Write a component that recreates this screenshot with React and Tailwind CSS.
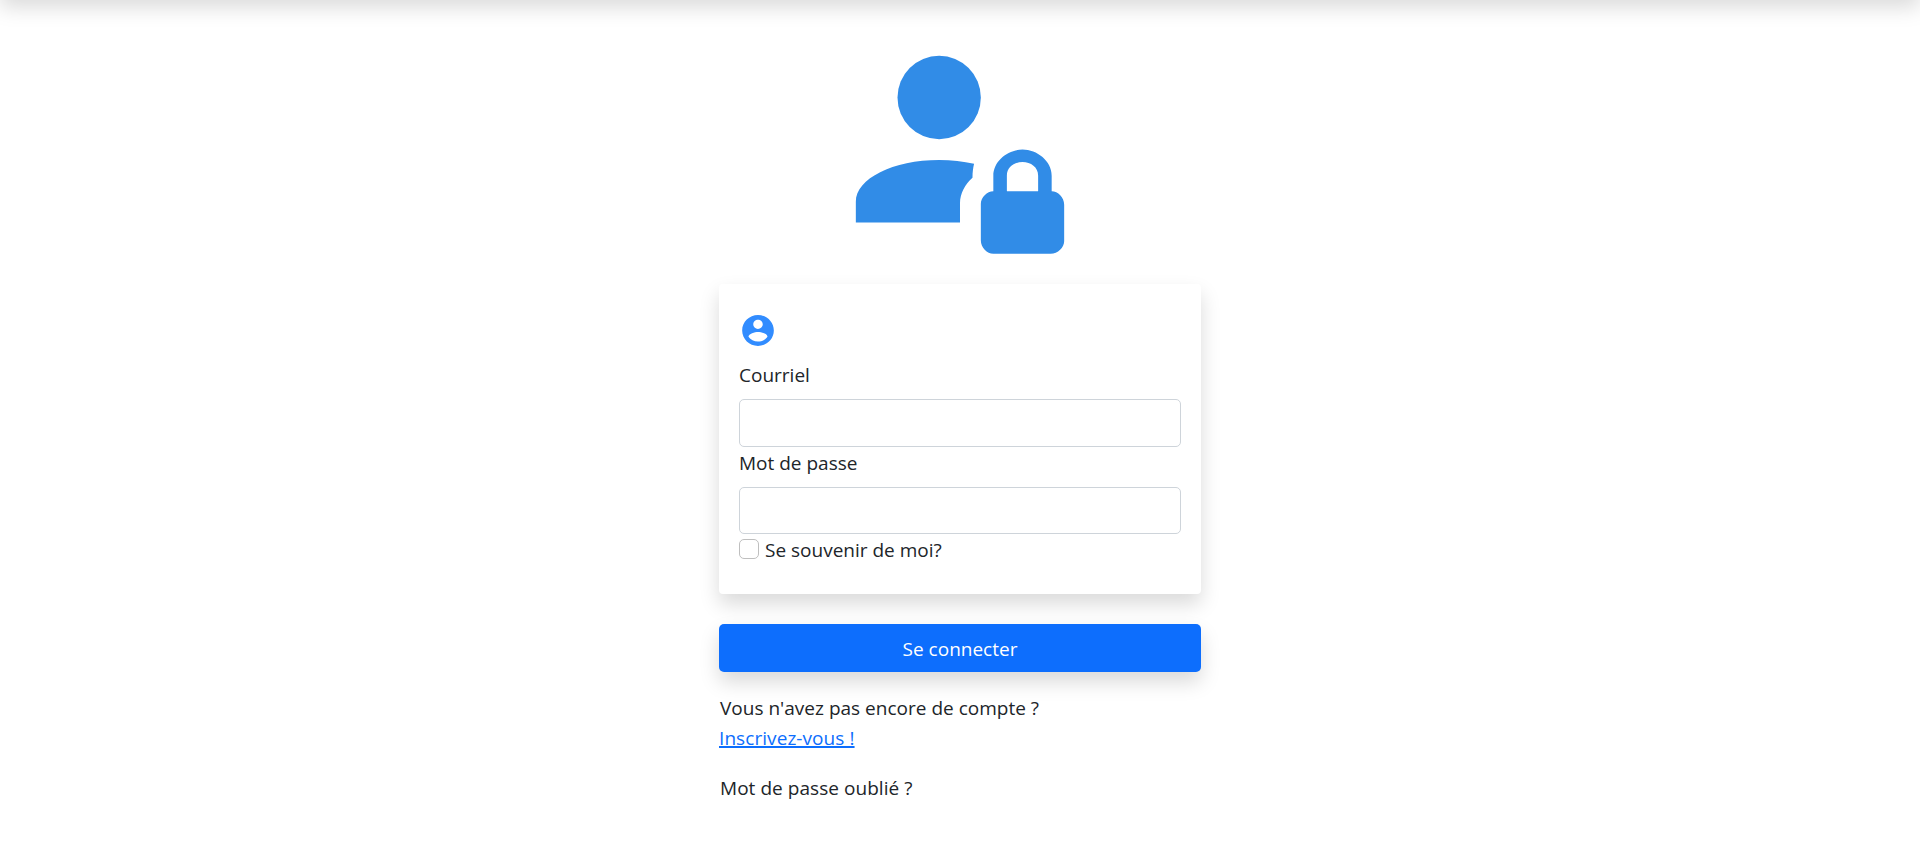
export default function App() {
  return (
    <div className="min-h-[843px] overflow-hidden bg-white font-['Open_Sans','Noto_Sans',sans-serif] text-[19px] leading-[30px] text-[#212529]">
      <header className="-mt-20 mb-[3px] h-[77px] shadow-[0_10px_20px_rgba(0,0,0,0.15)]" />
      <main className="mx-auto flex w-[482px] flex-col pt-[35px]">
        <svg className="h-[250px] w-[250px] self-center -mb-px" viewBox="0 0 24 24" fill="#318ce7" aria-hidden="true">
          <circle cx="10" cy="6" r="4" />
          <path d="M10 12C5.58 12 2 13.79 2 16V18H12V16.15C12 15.2 12.5 14.3 13.2 13.7C13.2 13.2 13.25 12.8 13.35 12.37C12.3 12.13 11.2 12 10 12Z" />
          <path d="M20.8 15V13.5C20.8 12.1 19.4 11 18 11S15.2 12.1 15.2 13.5V15C14.6 15 14 15.6 14 16.2V19.7C14 20.4 14.6 21 15.2 21H20.7C21.4 21 22 20.4 22 19.8V16.3C22 15.6 21.4 15 20.8 15M19.5 15H16.5V13.5C16.5 12.7 17.2 12.2 18 12.2S19.5 12.7 19.5 13.5V15Z" />
        </svg>
        <form className="flex flex-col">
          <section className="flex h-[310px] flex-col rounded-[4px] bg-white px-5 pt-[28px] shadow-[0_10px_20px_rgba(0,0,0,0.15)]">
            <svg className="h-[37px] w-[38px] shrink-0" viewBox="0 0 24 24" preserveAspectRatio="none" fill="#318cff" aria-hidden="true">
              <path d="M12 2C6.48 2 2 6.48 2 12s4.48 10 10 10 10-4.48 10-10S17.52 2 12 2zm0 3c1.66 0 3 1.34 3 3s-1.34 3-3 3-3-1.34-3-3 1.34-3 3-3zm0 14.2c-2.5 0-4.71-1.28-6-3.22.03-1.99 4-3.08 6-3.08 1.99 0 5.97 1.09 6 3.08-1.29 1.94-3.5 3.22-6 3.22z" />
            </svg>
            <label htmlFor="email" className="mt-[11px] mb-[9px]">Courriel</label>
            <input id="email" type="email" className="h-[48px] shrink-0 rounded-[5px] border border-[#ced4da] bg-white px-4 outline-none" />
            <label htmlFor="password" className="mt-px mb-[9px]">Mot de passe</label>
            <input id="password" type="password" className="h-[47px] shrink-0 rounded-[5px] border border-[#ced4da] bg-white px-4 outline-none" />
            <label className="mt-[2px] flex items-center gap-[6px]">
              <input type="checkbox" className="-mt-[3px] h-5 w-5 appearance-none rounded-[5px] border border-[#bfbfbf] bg-white" />
              <span className="-mt-px">Se souvenir de moi?</span>
            </label>
          </section>
          <button type="button" className="mt-[30px] h-[48px] rounded-[5px] bg-[#0d6efd] pt-[2px] text-white shadow-[0_10px_20px_rgba(0,0,0,0.15)]">Se connecter</button>
        </form>
        <p className="mt-[21px] pl-px tracking-[0.01px]">Vous n'avez pas encore de compte ?</p>
        <a href="#inscription" className="self-start tracking-[0.07px] text-[#0d6efd] underline decoration-2 underline-offset-1">Inscrivez-vous !</a>
        <p className="mt-5 pl-px tracking-[0.05px]">Mot de passe oublié ?</p>
      </main>
    </div>
  );
}
